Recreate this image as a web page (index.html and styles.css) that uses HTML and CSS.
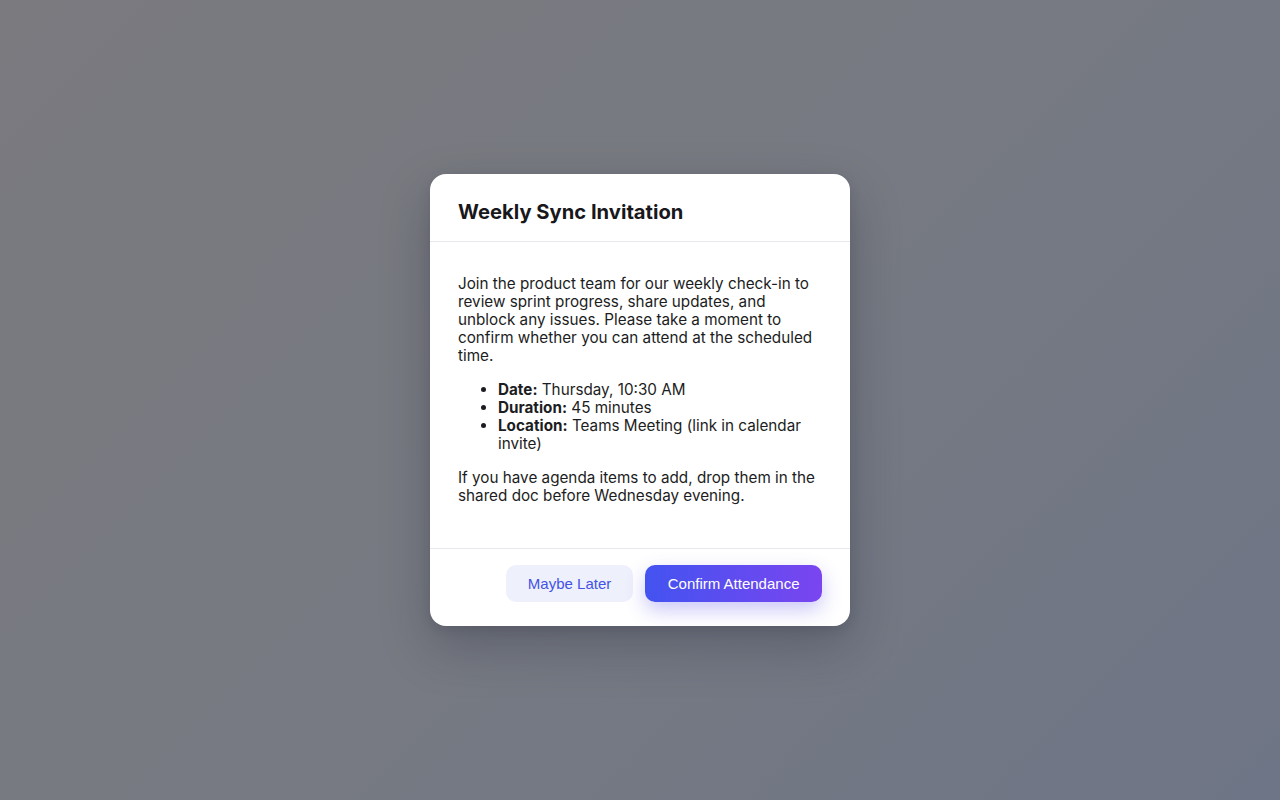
FILE: index.html
```html
<!DOCTYPE html>
<html lang="en">
<head>
<meta charset="utf-8">
<title>Weekly Sync Invitation</title>
<link rel="stylesheet" href="styles.css">
</head>
<body>
<div class="backdrop">
  <div class="dialog" role="dialog" aria-labelledby="dlg-title">
    <div class="dialog-header">
      <h2 id="dlg-title" class="dialog-title">Weekly Sync Invitation</h2>
    </div>
    <div class="dialog-body">
      <p>Join the product team for our weekly check-in to review sprint progress, share updates, and unblock any issues. Please take a moment to confirm whether you can attend at the scheduled time.</p>
      <ul class="details">
        <li><strong>Date:</strong> Thursday, 10:30 AM</li>
        <li><strong>Duration:</strong> 45 minutes</li>
        <li><strong>Location:</strong> Teams Meeting (link in calendar invite)</li>
      </ul>
      <p>If you have agenda items to add, drop them in the shared doc before Wednesday evening.</p>
    </div>
    <div class="dialog-footer">
      <button class="btn btn-secondary">Maybe Later</button>
      <button class="btn btn-primary">Confirm Attendance</button>
    </div>
  </div>
</div>
</body>
</html>
```
FILE: styles.css
```css
* { box-sizing: border-box; }
html, body { margin: 0; padding: 0; height: 100%; }
body {
  font-family: Inter, "Noto Sans", sans-serif;
  background: linear-gradient(135deg, #7a7a7f 0%, #777a82 50%, #6e7586 100%);
}
.backdrop {
  width: 1280px;
  height: 800px;
  display: flex;
  align-items: center;
  justify-content: center;
}
.dialog {
  width: 420px;
  background: #ffffff;
  border-radius: 16px;
  box-shadow: 0 20px 50px rgba(30, 34, 50, 0.28), 0 4px 12px rgba(30, 34, 50, 0.12);
  overflow: hidden;
}
.dialog-header {
  padding: 25px 28px 16px;
  border-bottom: 1px solid #e8e8ec;
}
.dialog-title {
  margin: 0;
  font-size: 20.2px;
  line-height: 26px;
  font-weight: 700;
  color: #18181c;
}
.dialog-body {
  padding: 33px 28px 43px;
  font-size: 15.25px;
  line-height: 18px;
  color: #1c1d22;
}
.dialog-body p { margin: 0; }
.details {
  margin: 16px 0;
  padding-left: 40px;
}
.details strong { font-weight: 700; }
.dialog-footer {
  border-top: 1px solid #e8e8ec;
  padding: 16px 28px 24px;
  display: flex;
  justify-content: flex-end;
  gap: 12px;
}
.btn {
  font-family: "Liberation Sans", Arial, sans-serif;
  font-size: 15px;
  height: 37px;
  border: none;
  border-radius: 10px;
  padding: 0 22.5px;
  cursor: pointer;
}
.btn-secondary {
  background: #eef0fc;
  color: #4452e6;
  padding: 0 22px;
}
.btn-primary {
  background: linear-gradient(90deg, #4353f0 0%, #7a45f0 100%);
  color: #ffffff;
  box-shadow: 0 8px 20px rgba(79, 70, 229, 0.3);
}
```
